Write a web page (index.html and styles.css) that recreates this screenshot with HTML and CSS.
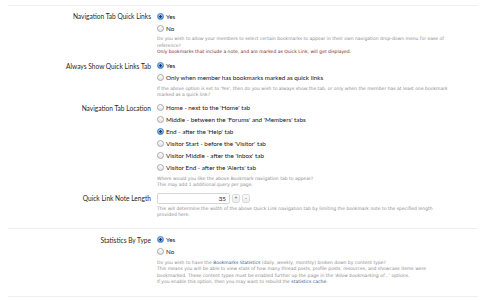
FILE: index.html
```html
<!DOCTYPE html>
<html>
<head>
<meta charset="utf-8">
<link rel="stylesheet" href="styles.css">
</head>
<body>
<div class="form">
  <div class="sep"></div>

  <div class="row row-a">
    <div class="label">Navigation Tab Quick Links</div>
    <div class="value">
      <ul class="opts">
        <li><span class="radio on"></span>Yes</li>
        <li><span class="radio"></span>No</li>
      </ul>
      <p class="explain">Do you wish to allow your members to select certain bookmarks to appear in their own navigation drop-down menu for ease of<br>reference?<br><span class="warn">Only bookmarks that include a note, and are marked as Quick Link, will get displayed.</span></p>
    </div>
  </div>

  <div class="row row-b">
    <div class="label">Always Show Quick Links Tab</div>
    <div class="value">
      <ul class="opts">
        <li><span class="radio on"></span>Yes</li>
        <li><span class="radio"></span>Only when member has bookmarks marked as quick links</li>
      </ul>
      <p class="explain">If the above option is set to 'Yes', then do you wish to always show the tab, or only when the member has at least one bookmark<br>marked as a quick link?</p>
    </div>
  </div>

  <div class="row row-c">
    <div class="label">Navigation Tab Location</div>
    <div class="value">
      <ul class="opts">
        <li><span class="radio"></span>Home - next to the 'Home' tab</li>
        <li><span class="radio"></span>Middle - between the 'Forums' and 'Members' tabs</li>
        <li><span class="radio on"></span>End - after the 'Help' tab</li>
        <li><span class="radio"></span>Visitor Start - before the 'Visitor' tab</li>
        <li><span class="radio"></span>Visitor Middle - after the 'Inbox' tab</li>
        <li><span class="radio"></span>Visitor End - after the 'Alerts' tab</li>
      </ul>
      <p class="explain">Where would you like the above Bookmark navigation tab to appear?<br>This may add 1 additional query per page.</p>
    </div>
  </div>

  <div class="row row-d">
    <div class="label label-input">Quick Link Note Length</div>
    <div class="value">
      <div class="spinner">
        <span class="num">35</span>
        <span class="btn">+</span>
        <span class="btn">-</span>
      </div>
      <p class="explain">This will determine the width of the above Quick Link navigation tab by limiting the bookmark note to the specified length<br>provided here.</p>
    </div>
  </div>

  <div class="sep sep-mid"></div>

  <div class="row row-e">
    <div class="label">Statistics By Type</div>
    <div class="value">
      <ul class="opts">
        <li><span class="radio on"></span>Yes</li>
        <li><span class="radio"></span>No</li>
      </ul>
      <p class="explain">Do you wish to have the <a class="link">Bookmarks Statistics</a> (daily, weekly, monthly) broken down by content type?<br>This means you will be able to view stats of how many thread posts, profile posts, resources, and showcase items were<br>bookmarked. These content types must be enabled further up the page in the '<i>Allow bookmarking of...</i>' options.<br>If you enable this option, then you may want to rebuild the <a class="link">statistics cache</a>.</p>
    </div>
  </div>

  <div class="sep sep-end"></div>
</div>
</body>
</html>
```

FILE: styles.css
```css
html, body {
  margin: 0;
  padding: 0;
  background: #ffffff;
}

.form {
  padding: 0 5px 0 8px;
  font-family: "Lato", "DejaVu Sans", sans-serif;
  color: #333333;
}

.sep {
  height: 1px;
  background: #eef0f4;
  margin-top: 5px;
}

.sep-mid {
  margin-top: 9px;
}

.sep-end {
  margin-top: 10px;
}

.row {
  display: grid;
  grid-template-columns: 143px 306px;
  column-gap: 6px;
  margin-top: 4px;
}

.row-a { margin-top: 4px; }
.row-b { margin-top: 4px; }
.row-c { margin-top: 3px; }
.row-d { margin-top: 4px; }
.row-e { margin-top: 5px; }

.label {
  text-align: right;
  font-size: 6.6px;
  line-height: 12px;
  color: #262626;
  white-space: nowrap;
}

.label-input {
  line-height: 11px;
}

.value {
  min-width: 0;
}

.opts {
  list-style: none;
  margin: 0;
  padding: 0;
}

.opts li {
  display: flex;
  align-items: center;
  height: 12px;
  font-size: 6.3px;
  color: #141414;
  white-space: nowrap;
}

.radio {
  flex: none;
  width: 5px;
  height: 5px;
  border-radius: 50%;
  border: 0.7px solid #a9a9a9;
  background: linear-gradient(#fdfdfd, #e4e4e4);
  margin-right: 2px;
}

.radio.on {
  border-color: #4a7fbf;
  background: radial-gradient(circle at 50% 50%, #1d3f73 0, #1d3f73 1px, transparent 1.4px),
              linear-gradient(#a9cdf5, #4b8ede);
}

.explain {
  margin: 2px 0 0 0;
  font-family: "DejaVu Sans", sans-serif;
  font-size: 4.5px;
  line-height: 6.5px;
  color: #8d8d8d;
  white-space: nowrap;
}

.warn {
  color: #7d1f1f;
}

.link {
  color: #2a5a96;
}

.spinner {
  display: flex;
  align-items: center;
  height: 11px;
}

.num {
  box-sizing: border-box;
  width: 73px;
  height: 11px;
  border: 1px solid #d6d6d6;
  border-radius: 2px;
  background: #ffffff;
  text-align: right;
  padding-right: 3px;
  font-size: 6.3px;
  line-height: 9px;
  color: #222222;
}

.btn {
  box-sizing: border-box;
  width: 8px;
  height: 9px;
  margin-left: 2px;
  border: 1px solid #dcdcdc;
  border-radius: 2px;
  background: linear-gradient(#fafafa, #ececec);
  font-size: 5px;
  line-height: 7px;
  text-align: center;
  color: #555555;
}
```
